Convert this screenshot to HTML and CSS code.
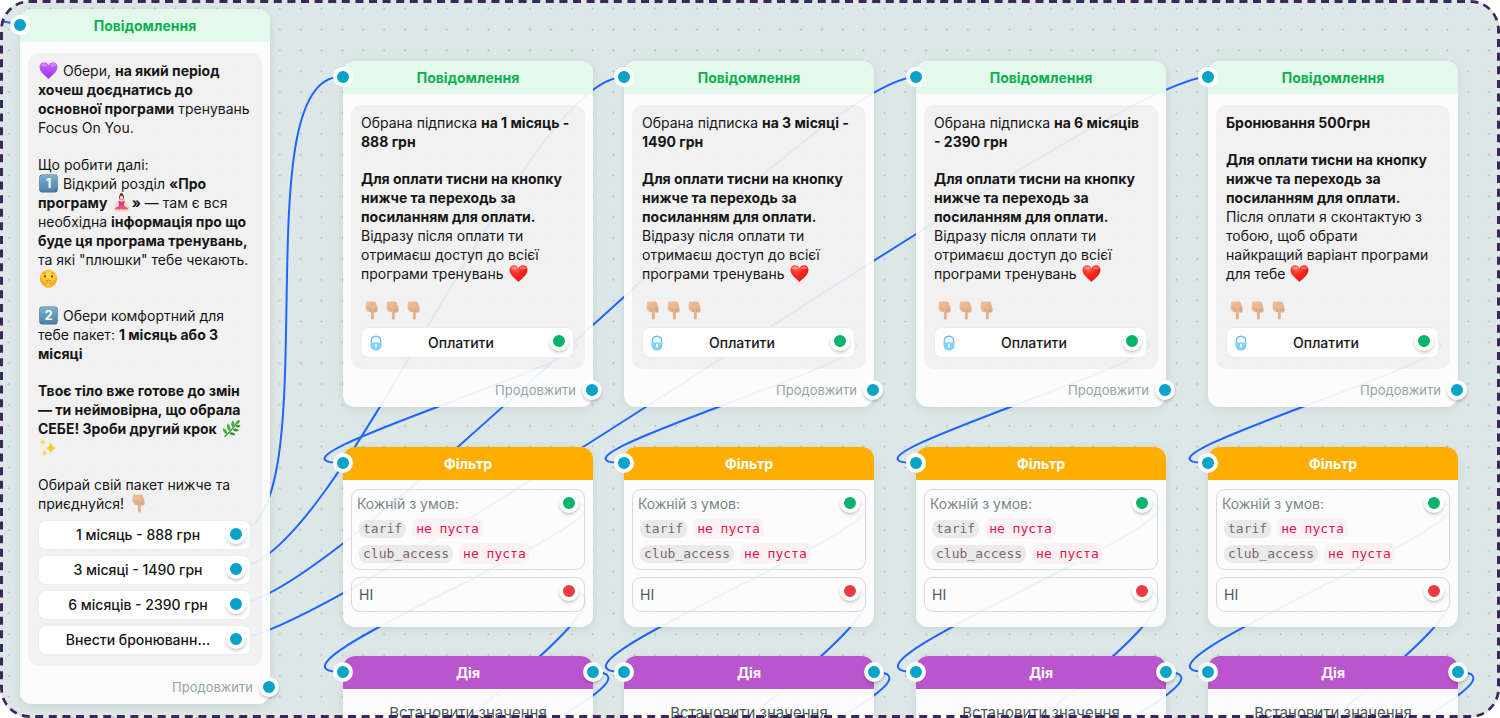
FILE: index.html
```html
<!DOCTYPE html>
<html lang="uk">
	<head>
		<meta charset="UTF-8">
		<meta name="viewport" content="width=device-width, initial-scale=1.0">
		<title>Сценарій</title>
		<link rel="stylesheet" href="styles.css">
	</head>
	<body>
		<!-- shared emoji and icons -->
		<svg class="sprite" aria-hidden="true">
			<defs>
				<linearGradient id="g-purple" x1="0" y1="0" x2="0" y2="1">
					<stop offset="0" stop-color="#c868fb"/>
					<stop offset="1" stop-color="#a02cf0"/>
				</linearGradient>
				<radialGradient id="g-red" cx="0.35" cy="0.2" r="0.9">
					<stop offset="0" stop-color="#ff6a5c"/>
					<stop offset="0.4" stop-color="#fb2a22"/>
					<stop offset="1" stop-color="#e0100f"/>
				</radialGradient>
				<linearGradient id="g-key" x1="0" y1="0" x2="0" y2="1">
					<stop offset="0" stop-color="#7fb0d0"/>
					<stop offset="1" stop-color="#4c81a8"/>
				</linearGradient>
				<radialGradient id="g-face" cx="0.5" cy="0.35" r="0.65">
					<stop offset="0" stop-color="#ffe04a"/>
					<stop offset="0.6" stop-color="#ffc42c"/>
					<stop offset="1" stop-color="#f29413"/>
				</radialGradient>
				<linearGradient id="g-hand" x1="0" y1="0" x2="1" y2="1">
					<stop offset="0" stop-color="#eec29d"/>
					<stop offset="1" stop-color="#dda77f"/>
				</linearGradient>
				<linearGradient id="g-lock" x1="0" y1="0" x2="0" y2="1">
					<stop offset="0" stop-color="#5db4ea"/>
					<stop offset="1" stop-color="#7fd6f8"/>
				</linearGradient>
				<symbol id="e-purple" viewBox="0 0 21 19">
					<path fill="url(#g-purple)" d="M10.500 18C8.500 15.300 1.500 11.500 1.500 6C1.500 3 3.600 1.200 6 1.200C8.200 1.200 9.800 2.400 10.500 4.200C11.200 2.400 12.800 1.200 15 1.200C17.400 1.200 19.500 3 19.500 6C19.500 11.500 12.500 15.300 10.500 18Z"/>
					<ellipse cx="6" cy="4" rx="3" ry="1.700" fill="#fff" opacity="0.250"/>
					<ellipse cx="15" cy="4" rx="3" ry="1.700" fill="#fff" opacity="0.250"/>
				</symbol>
				<symbol id="e-heart" viewBox="0 0 21 19">
					<path fill="url(#g-red)" d="M10.500 18C8.500 15.300 1.500 11.500 1.500 6C1.500 3 3.600 1.200 6 1.200C8.200 1.200 9.800 2.400 10.500 4.200C11.200 2.400 12.800 1.200 15 1.200C17.400 1.200 19.500 3 19.500 6C19.500 11.500 12.500 15.300 10.500 18Z"/>
					<ellipse cx="6" cy="3.800" rx="3" ry="1.600" fill="#fff" opacity="0.300"/>
					<ellipse cx="15" cy="3.800" rx="3" ry="1.600" fill="#fff" opacity="0.300"/>
				</symbol>
				<symbol id="e-key" viewBox="0 0 21 19">
					<rect x="1.300" y="0.600" width="18.400" height="17.800" rx="3" fill="#40698c"/>
					<rect x="1.800" y="0.900" width="17.400" height="16.800" rx="2.600" fill="url(#g-key)"/>
				</symbol>
				<symbol id="e-hush" viewBox="0 0 21 19">
					<circle cx="10.500" cy="9.300" r="8.700" fill="url(#g-face)"/>
					<path d="M5 4.600Q6.500 3.300 8 4.200M13 4.200Q14.600 3.300 16 4.600" stroke="#b06a18" stroke-width="0.700" fill="none"/>
					<ellipse cx="7" cy="7.300" rx="1" ry="1.400" fill="#7b4310"/>
					<ellipse cx="14" cy="7.300" rx="1" ry="1.400" fill="#7b4310"/>
					<path d="M8.400 11.800Q10.500 10.600 12.600 11.800" stroke="#9c5512" stroke-width="1" fill="none"/>
					<path d="M9.700 10.200Q10.600 9 11.300 10.400L11.600 14Q14 14 14 16L13 18.300H8Q6.400 16.500 7.600 14.700L9.600 14Z" fill="#ffc136" stroke="#e9921c" stroke-width="0.500"/>
				</symbol>
				<symbol id="e-down" viewBox="0 0 21 19">
					<path fill="url(#g-hand)" d="M5 1.500Q5 0.500 6.200 0.500H13Q14.500 0.500 15 2L16.600 7.500Q17.200 10.600 15.800 11.300Q14.600 12 13.400 11.200Q13 11.800 12.800 11.600V17Q12.700 18.500 11.300 18.500Q10 18.500 9.900 17V11Q7 11.500 5.300 9.200Q4 7.200 4.600 5Z"/>
					<path d="M9.800 11.200L9.500 8.300M12.700 11.300L12.400 8M14.900 10.600L14.200 7.600M5.800 5.800L9.600 8.500" stroke="#cd946a" stroke-width="0.600" fill="none"/>
				</symbol>
				<symbol id="e-yoga" viewBox="0 0 21 19">
					<circle cx="10.500" cy="1.600" r="1.500" fill="#54301f"/>
					<ellipse cx="10.500" cy="4.200" rx="2.400" ry="2.900" fill="#54301f"/>
					<ellipse cx="10.500" cy="4.800" rx="1.700" ry="2.200" fill="#f7d3b8"/>
					<path d="M7.700 8L5.300 11.500L4 14.500M13.300 8L15.700 11.500L17 14.500" stroke="#f5cfb5" stroke-width="1.700" stroke-linecap="round" fill="none"/>
					<path d="M9.700 6.500H11.300V8H9.700Z" fill="#eebfa1"/>
					<path d="M7.500 7.500Q10.500 9.500 13.500 7.500L13 13.500H8Z" fill="#d83a84"/>
					<path d="M7.800 12.500H13.200L17.200 15.400Q17.300 17 15 17.200L10.500 16.200L6 17.200Q3.700 17 3.800 15.400Z" fill="#e85a78"/>
					<path d="M2.500 16.500Q6 15.500 10.500 17.500Q15 15.500 18.500 16.500Q18.500 18.200 15 18.200H6Q2.500 18.200 2.500 16.500Z" fill="#f5cfb5"/>
				</symbol>
				<symbol id="e-herb" viewBox="0 0 21 19">
					<path d="M3.500 17.800Q9 13.500 15.500 4" stroke="#2b8a2e" stroke-width="1.200" fill="none"/>
					<path fill="#43b03c" d="M15 5.500Q14 2 18.500 0.800Q20 4.500 15 5.500ZM12.300 8.800Q8.500 6 11.500 1.500Q15 4 12.300 8.800ZM9 12.300Q4.500 10 6.500 4.500Q10.500 7.500 9 12.300ZM6 15.300Q1.500 14 2 9Q6.500 10.500 6 15.300Z"/>
					<path fill="#2f9a34" d="M14 7Q16 4.500 19.600 7Q17.500 10 14 7ZM11.500 10.500Q14.500 8 18 11.500Q14.500 14 11.500 10.500ZM8 14Q11.500 12 14.500 15.500Q11 17.800 8 14Z"/>
				</symbol>
				<symbol id="e-spark" viewBox="0 0 21 19">
					<path fill="#fdc42f" d="M12.800 3.500Q13.300 9 18.500 10Q13.300 11 12.800 16.500Q12.300 11 7.500 10Q12.300 9 12.800 3.500Z"/>
					<path fill="#fbd04e" d="M5 0.800Q5.200 3.800 8 4.300Q5.200 4.800 5 7.800Q4.800 4.800 2 4.300Q4.800 3.800 5 0.800ZM6.500 11.800Q6.700 14.500 9.300 15Q6.700 15.500 6.500 18.200Q6.300 15.500 3.800 15Q6.300 14.500 6.500 11.800Z"/>
				</symbol>
				<symbol id="i-lock" viewBox="0 0 12 16">
					<rect x="1.200" y="1.100" width="9.600" height="13.800" rx="4.800" fill="#eefaff" stroke="url(#g-lock)" stroke-width="1.300"/>
					<path d="M1 7.500H11V10.500Q11 15.200 6 15.200Q1 15.200 1 10.500Z" fill="#7dd3f7"/>
					<path d="M6 8.700A1.200 1.200 0 0 1 6.600 10.900L6.800 12.800H5.200L5.400 10.900A1.200 1.200 0 0 1 6 8.700Z" fill="#fff"/>
				</symbol>
			</defs>
		</svg>

		<main class="canvas">
			<!-- dot grid and wires, drawn under the blocks -->
			<svg class="wires" aria-hidden="true">
				<defs>
					<pattern id="dots" x="-1.600" y="-1.700" width="20.850" height="20.850" patternUnits="userSpaceOnUse">
						<circle cx="10.420" cy="10.420" r="0.900" fill="#a3bebc"/>
					</pattern>
					<g id="lane-wires">
						<path d="M559 341C667 341 234 463 342 463"/>
						<path d="M568 503C676 503 234 672 342 672"/>
						<path d="M568 591C676 591 235 865 343 865"/>
						<path d="M592 672C700 672 235 865 343 865"/>
					</g>
				</defs>
				<rect width="100%" height="100%" fill="url(#dots)"/>
				<path d="M-20 17C-5 17 5 24 20 24"/>
				<path d="M233 533C333 533 240 77 340 77"/>
				<path d="M236 568C336 568 524 77 624 77"/>
				<path d="M236 604C336 604 816 77 916 77"/>
				<path d="M236 639C336 639 1108 77 1208 77"/>
				<use href="#lane-wires"/>
				<use href="#lane-wires" x="281"/>
				<use href="#lane-wires" x="573"/>
				<use href="#lane-wires" x="865"/>
			</svg>

			<section class="lane lane-start">
				<article class="block message">
					<span class="port port-in"></span>
					<h2>Повідомлення</h2>
					<div class="bubble">
						<p><svg class="emoji" role="img" aria-label="💜"><use href="#e-purple"/></svg> Обери, <b>на який період<br>хочеш доєднатись до<br>основної програми</b> тренувань<br>Focus On You.</p>
						<p>Що робити далі:<br><span class="keycap"><svg class="emoji" aria-hidden="true"><use href="#e-key"/></svg><i>1</i></span> Відкрий розділ <b>«Про<br>програму <svg class="emoji" role="img" aria-label="🧘🏻‍♀️"><use href="#e-yoga"/></svg>»</b> — там є вся<br>необхідна <b>інформація про що<br>буде ця програма тренувань,</b><br>та які "плюшки" тебе чекають.<br><svg class="emoji" role="img" aria-label="🤫"><use href="#e-hush"/></svg></p>
						<p><span class="keycap"><svg class="emoji" aria-hidden="true"><use href="#e-key"/></svg><i>2</i></span> Обери комфортний для<br>тебе пакет: <b>1 місяць або 3<br>місяці</b></p>
						<p><b>Твоє тіло вже готове до змін<br>— ти неймовірна, що обрала<br>СЕБЕ! Зроби другий крок</b> <svg class="emoji" role="img" aria-label="🌿"><use href="#e-herb"/></svg><br><svg class="emoji" role="img" aria-label="✨"><use href="#e-spark"/></svg></p>
						<p>Обирай свій пакет нижче та<br>приєднуйся! <svg class="emoji" role="img" aria-label="👇🏼"><use href="#e-down"/></svg></p>
						<div class="choices">
							<button type="button">1 місяць - 888 грн<span class="port"></span></button>
							<button type="button">3 місяці - 1490 грн<span class="port"></span></button>
							<button type="button">6 місяців - 2390 грн<span class="port"></span></button>
							<button type="button">Внести бронюванн...<span class="port"></span></button>
						</div>
					</div>
					<div class="next">Продовжити<span class="port"></span></div>
				</article>
			</section>

			<section class="lane lane-one">
				<article class="block message">
					<span class="port port-in"></span>
					<h2>Повідомлення</h2>
					<div class="bubble">
						<p>Обрана підписка <b>на 1 місяць -<br>888 грн</b></p>
						<p><b>Для оплати тисни на кнопку<br>нижче та переходь за<br>посиланням для оплати.</b><br>Відразу після оплати ти<br>отримаєш доступ до всієї<br>програми тренувань <svg class="emoji" role="img" aria-label="❤️"><use href="#e-heart"/></svg></p>
						<p><svg class="emoji" role="img" aria-label="👇🏼"><use href="#e-down"/></svg><svg class="emoji" role="img" aria-label="👇🏼"><use href="#e-down"/></svg><svg class="emoji" role="img" aria-label="👇🏼"><use href="#e-down"/></svg></p>
						<div class="choices pay">
							<button type="button"><svg class="lock" aria-hidden="true"><use href="#i-lock"/></svg>Оплатити<span class="port port-yes"></span></button>
						</div>
					</div>
					<div class="next">Продовжити<span class="port"></span></div>
				</article>
				<article class="block filter">
					<span class="port port-in"></span>
					<h2>Фільтр</h2>
					<div class="rule">
						<div class="rule-title">Кожній з умов:</div>
						<div class="rule-row"><code>tarif</code><code class="op">не пуста</code></div>
						<div class="rule-row"><code>club_access</code><code class="op">не пуста</code></div>
						<span class="port port-yes"></span>
					</div>
					<div class="rule rule-else">НІ<span class="port port-no"></span></div>
				</article>
				<article class="block action">
					<span class="port port-in"></span>
					<span class="port port-out"></span>
					<h2>Дія</h2>
					<p>Встановити значення</p>
				</article>
			</section>

			<section class="lane lane-two">
				<article class="block message">
					<span class="port port-in"></span>
					<h2>Повідомлення</h2>
					<div class="bubble">
						<p>Обрана підписка <b>на 3 місяці -<br>1490 грн</b></p>
						<p><b>Для оплати тисни на кнопку<br>нижче та переходь за<br>посиланням для оплати.</b><br>Відразу після оплати ти<br>отримаєш доступ до всієї<br>програми тренувань <svg class="emoji" role="img" aria-label="❤️"><use href="#e-heart"/></svg></p>
						<p><svg class="emoji" role="img" aria-label="👇🏼"><use href="#e-down"/></svg><svg class="emoji" role="img" aria-label="👇🏼"><use href="#e-down"/></svg><svg class="emoji" role="img" aria-label="👇🏼"><use href="#e-down"/></svg></p>
						<div class="choices pay">
							<button type="button"><svg class="lock" aria-hidden="true"><use href="#i-lock"/></svg>Оплатити<span class="port port-yes"></span></button>
						</div>
					</div>
					<div class="next">Продовжити<span class="port"></span></div>
				</article>
				<article class="block filter">
					<span class="port port-in"></span>
					<h2>Фільтр</h2>
					<div class="rule">
						<div class="rule-title">Кожній з умов:</div>
						<div class="rule-row"><code>tarif</code><code class="op">не пуста</code></div>
						<div class="rule-row"><code>club_access</code><code class="op">не пуста</code></div>
						<span class="port port-yes"></span>
					</div>
					<div class="rule rule-else">НІ<span class="port port-no"></span></div>
				</article>
				<article class="block action">
					<span class="port port-in"></span>
					<span class="port port-out"></span>
					<h2>Дія</h2>
					<p>Встановити значення</p>
				</article>
			</section>

			<section class="lane lane-three">
				<article class="block message">
					<span class="port port-in"></span>
					<h2>Повідомлення</h2>
					<div class="bubble">
						<p>Обрана підписка <b>на 6 місяців<br>- 2390 грн</b></p>
						<p><b>Для оплати тисни на кнопку<br>нижче та переходь за<br>посиланням для оплати.</b><br>Відразу після оплати ти<br>отримаєш доступ до всієї<br>програми тренувань <svg class="emoji" role="img" aria-label="❤️"><use href="#e-heart"/></svg></p>
						<p><svg class="emoji" role="img" aria-label="👇🏼"><use href="#e-down"/></svg><svg class="emoji" role="img" aria-label="👇🏼"><use href="#e-down"/></svg><svg class="emoji" role="img" aria-label="👇🏼"><use href="#e-down"/></svg></p>
						<div class="choices pay">
							<button type="button"><svg class="lock" aria-hidden="true"><use href="#i-lock"/></svg>Оплатити<span class="port port-yes"></span></button>
						</div>
					</div>
					<div class="next">Продовжити<span class="port"></span></div>
				</article>
				<article class="block filter">
					<span class="port port-in"></span>
					<h2>Фільтр</h2>
					<div class="rule">
						<div class="rule-title">Кожній з умов:</div>
						<div class="rule-row"><code>tarif</code><code class="op">не пуста</code></div>
						<div class="rule-row"><code>club_access</code><code class="op">не пуста</code></div>
						<span class="port port-yes"></span>
					</div>
					<div class="rule rule-else">НІ<span class="port port-no"></span></div>
				</article>
				<article class="block action">
					<span class="port port-in"></span>
					<span class="port port-out"></span>
					<h2>Дія</h2>
					<p>Встановити значення</p>
				</article>
			</section>

			<section class="lane lane-four">
				<article class="block message">
					<span class="port port-in"></span>
					<h2>Повідомлення</h2>
					<div class="bubble">
						<p><b>Бронювання 500грн</b></p>
						<p><b>Для оплати тисни на кнопку<br>нижче та переходь за<br>посиланням для оплати.</b><br>Після оплати я сконтактую з<br>тобою, щоб обрати<br>найкращий варіант програми<br>для тебе <svg class="emoji" role="img" aria-label="❤️"><use href="#e-heart"/></svg></p>
						<p><svg class="emoji" role="img" aria-label="👇🏼"><use href="#e-down"/></svg><svg class="emoji" role="img" aria-label="👇🏼"><use href="#e-down"/></svg><svg class="emoji" role="img" aria-label="👇🏼"><use href="#e-down"/></svg></p>
						<div class="choices pay">
							<button type="button"><svg class="lock" aria-hidden="true"><use href="#i-lock"/></svg>Оплатити<span class="port port-yes"></span></button>
						</div>
					</div>
					<div class="next">Продовжити<span class="port"></span></div>
				</article>
				<article class="block filter">
					<span class="port port-in"></span>
					<h2>Фільтр</h2>
					<div class="rule">
						<div class="rule-title">Кожній з умов:</div>
						<div class="rule-row"><code>tarif</code><code class="op">не пуста</code></div>
						<div class="rule-row"><code>club_access</code><code class="op">не пуста</code></div>
						<span class="port port-yes"></span>
					</div>
					<div class="rule rule-else">НІ<span class="port port-no"></span></div>
				</article>
				<article class="block action">
					<span class="port port-in"></span>
					<span class="port port-out"></span>
					<h2>Дія</h2>
					<p>Встановити значення</p>
				</article>
			</section>

			<svg class="frame" aria-hidden="true"><rect x="1" y="1" rx="28"/></svg>
		</main>
	</body>
</html>
```
FILE: styles.css
```css
* {
    margin: 0;
    padding: 0;
    box-sizing: border-box;
}

body {
    font-family: Inter, Roboto, "Liberation Sans", sans-serif;
    font-size: 14px;
    line-height: 19px;
    color: #161616;
    background: #fff;
}

.sprite {
    position: absolute;
    width: 0;
    height: 0;
}

.canvas {
    position: relative;
    height: 100vh;
    background: #dee7e8;
    border-radius: 30px;
    overflow: hidden;
}

.wires,
.frame {
    position: absolute;
    top: 0;
    left: 0;
    width: 100%;
    height: 100%;
    pointer-events: none;
}

.wires path {
    fill: none;
    stroke: #1d66ff;
    stroke-width: 2;
}

.frame rect {
    width: calc(100% - 2px);
    height: calc(100% - 2px);
    fill: none;
    stroke: #3c2858;
    stroke-width: 4;
    stroke-dasharray: 8 5.6;
}

/* Block positions on the canvas */
.lane {
    position: absolute;
    top: 61px;
    width: 250px;
}

.lane-start {
    top: 9px;
    left: 20px;
}

.lane-one {
    left: 343px;
}

.lane-two {
    left: 624px;
}

.lane-three {
    left: 916px;
}

.lane-four {
    left: 1208px;
}

.block {
    position: relative;
    background: rgba(255, 254, 254, 0.92);
    border-radius: 12px;
    box-shadow: 0 2px 8px rgba(40, 80, 80, 0.12);
}

.block h2 {
    height: 33px;
    border-radius: 12px 12px 0 0;
    font-size: 14px;
    font-weight: 700;
    line-height: 34px;
    text-align: center;
}

.message h2 {
    background: #e3f9ec;
    color: #0cb04f;
}

.filter {
    margin-top: 40px;
    padding-bottom: 15px;
}

.filter h2 {
    background: #ffae00;
    color: #fff;
}

.action {
    margin-top: 29px;
    height: 120px;
}

.action h2 {
    background: #ba55cd;
    color: #fff;
}

.action p {
    padding-top: 14px;
    font-size: 15px;
    text-align: center;
    color: #4b5a5b;
}

.bubble {
    margin: 11px 8px 0;
    padding: 8px 11px 11px 10px;
    background: rgba(0, 0, 0, 0.045);
    border-radius: 10px;
}

.bubble p {
    white-space: nowrap;
}

.bubble p + p {
    margin-top: 18px;
}

.bubble b {
    font-weight: 700;
}

.emoji {
    width: 21px;
    height: 19px;
    vertical-align: top;
}

.keycap {
    position: relative;
}

.keycap i {
    position: absolute;
    top: 0;
    left: 0;
    width: 21px;
    font-size: 13px;
    font-style: normal;
    font-weight: 700;
    line-height: 17px;
    text-align: center;
    color: #fff;
}

.choices {
    display: flex;
    flex-direction: column;
    gap: 5px;
    margin-top: 7px;
}

.choices button {
    position: relative;
    height: 30px;
    padding-right: 13px;
    padding-bottom: 1px;
    border: 1px solid #ececec;
    border-radius: 8px;
    background: #fff;
    font-family: inherit;
    font-size: 14px;
    font-weight: 500;
    color: #161616;
    cursor: pointer;
}

.pay button {
    height: 31px;
}

.lock {
    position: absolute;
    top: 7px;
    left: 8px;
    width: 12px;
    height: 16px;
}

.next {
    position: relative;
    padding: 12px 17px 7px;
    font-size: 13px;
    text-align: right;
    color: #90a6a6;
}

.port {
    position: absolute;
    width: 20px;
    height: 20px;
    border: 4px solid #fff;
    border-radius: 50%;
    background: #04a3c8;
    box-shadow: 0 2px 3px rgba(0, 0, 0, 0.2);
}

.port-yes {
    background: #04b46c;
}

.port-no {
    background: #ee3a46;
}

.port-in {
    top: 6px;
    left: -10px;
    box-shadow: none;
}

.port-out {
    top: 6px;
    right: -10px;
}

.next .port {
    top: 11px;
    right: -9px;
}

.choices .port {
    top: 3px;
    right: 4px;
}

.rule {
    position: relative;
    margin: 9px 8px 0;
    padding: 4px 5px 3px;
    border: 1px solid #d3dcdc;
    border-radius: 9px;
    color: #7a8788;
}

.rule .port {
    top: 3px;
    right: 5px;
}

.rule-title {
    margin-bottom: 3px;
}

.rule-row {
    display: flex;
    align-items: center;
    gap: 6px;
    height: 25px;
    padding: 0 2px;
}

.rule code {
    padding: 0 4px;
    border-radius: 8px;
    background: #eaeaea;
    font-family: "DejaVu Sans Mono", "Liberation Mono", monospace;
    font-size: 13px;
    line-height: 18px;
    color: #7d686c;
}

.rule .op {
    background: #fcf1f3;
    line-height: 21px;
    color: #dc1650;
}

.rule-else {
    margin-top: 7px;
    padding: 7px;
    color: #4b5a5b;
}
```
